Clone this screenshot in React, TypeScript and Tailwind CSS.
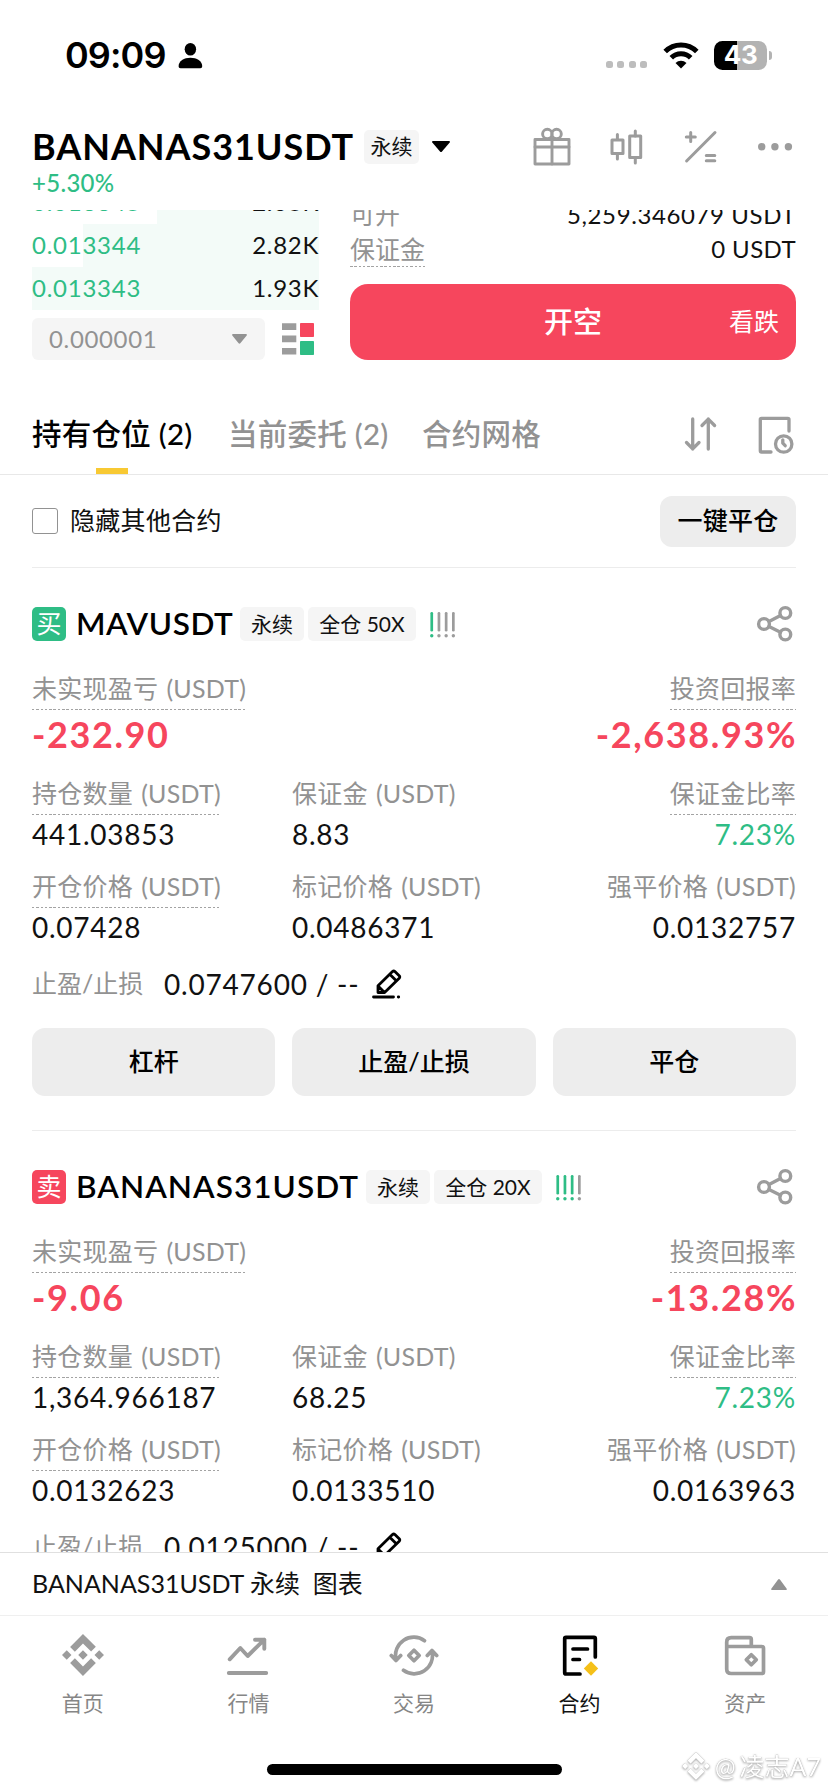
import type { ReactNode } from "react";
import { SiBinance } from "react-icons/si";
import clsx from "clsx";

type Side = "buy" | "sell";

type Position = {
  side: Side;
  symbol: string;
  leverage: string;
  risk: number;
  pnl: string;
  roi: string;
  size: string;
  margin: string;
  marginRatio: string;
  entryPrice: string;
  markPrice: string;
  liqPrice: string;
  takeProfit: string;
};

const POSITIONS: Position[] = [
  {
    side: "buy",
    symbol: "MAVUSDT",
    leverage: "全仓 50X",
    risk: 1,
    pnl: "-232.90",
    roi: "-2,638.93%",
    size: "441.03853",
    margin: "8.83",
    marginRatio: "7.23%",
    entryPrice: "0.07428",
    markPrice: "0.0486371",
    liqPrice: "0.0132757",
    takeProfit: "0.0747600 / --",
  },
  {
    side: "sell",
    symbol: "BANANAS31USDT",
    leverage: "全仓 20X",
    risk: 3,
    pnl: "-9.06",
    roi: "-13.28%",
    size: "1,364.966187",
    margin: "68.25",
    marginRatio: "7.23%",
    entryPrice: "0.0132623",
    markPrice: "0.0133510",
    liqPrice: "0.0163963",
    takeProfit: "0.0125000 / --",
  },
];

const BIDS = [
  { price: "0.013345", amount: "2.06K", depth: "w-[162px]" },
  { price: "0.013344", amount: "2.82K", depth: "w-[236px]" },
  { price: "0.013343", amount: "1.93K", depth: "w-[287px]" },
];

const line = {
  fill: "none",
  stroke: "currentColor",
  strokeLinecap: "round",
  strokeLinejoin: "round",
} as const;

function StatusBar() {
  return (
    <div className="flex h-[110px] shrink-0 items-start justify-between pl-[65px] pr-[56px] pt-[35px]">
      <div className="flex h-10 items-center">
        <span className="w-[111px] font-['Inter'] text-[36px] font-semibold tracking-[-0.9px] text-black">09:09</span>
        <svg className="ml-[2px] h-[27px] w-[25px]" viewBox="0 0 25 27" fill="#000">
          <ellipse cx="12.4" cy="7.3" rx="5.7" ry="6.3" />
          <path d="M.6 24.2C.6 19 6 15.800 12.400 15.800S24.200 19 24.200 24.200c0 1.300-.7 2-1.900 2H2.500C1.300 26.200.6 25.500.6 24.200z" />
        </svg>
      </div>
      <div className="flex h-10 items-center">
        <div className="mr-[16px] mt-[18px] flex gap-[4.400px]">
          {[0, 1, 2, 3].map((i) => (
            <span key={i} className="h-[7px] w-[7px] rounded-[2.500px] bg-[#bdbdbd]" />
          ))}
        </div>
        <svg className="h-[27px] w-[36px]" viewBox="0 0 36 27">
          <g fill="none" stroke="#000" strokeWidth="5">
            <path d="M2.200 9.600a22.300 22.300 0 0 1 31.600 0" />
            <path d="M8.300 15.700a13.700 13.700 0 0 1 19.400 0" />
          </g>
          <path d="M18 26.500l-5.500-5.600a8 8 0 0 1 11 0z" fill="#000" />
        </svg>
        <div className="ml-[15px] flex items-center">
          <div className="flex h-[29px] w-[53px] items-center justify-center rounded-[8.500px] bg-[linear-gradient(90deg,#000_43%,#b3b3b3_43%)]">
            <span className="font-['Inter'] text-[26px] font-bold leading-none tracking-[-0.5px] text-white">43</span>
          </div>
          <span className="ml-[2px] h-[9px] w-[3px] rounded-r-full bg-[#b3b3b3]" />
        </div>
      </div>
    </div>
  );
}

function Header() {
  return (
    <header className="flex h-[100px] shrink-0 items-start justify-between px-8">
      <div>
        <div className="flex h-[73px] items-center">
          <h1 className="w-[332px] whitespace-nowrap pb-[2px] text-[36px] font-bold tracking-[0.950px] text-black">
            BANANAS31USDT
          </h1>
          <span className="flex h-[34px] w-[55px] items-center justify-center rounded-[5px] bg-[#f5f5f5] pb-[2px] text-[21px] text-[#111]">
            永续
          </span>
          <svg className="ml-[12px] h-[13px] w-[20px]" viewBox="0 0 20 13">
            <path d="M2 1h16c1 0 1.200.8.700 1.400l-7.700 9.100c-.6.7-1.400.7-2 0L1.300 2.400C.8 1.800 1 1 2 1z" fill="#000" />
          </svg>
        </div>
        <p className="-mt-[15px] text-[24px] font-medium leading-[29px] tracking-[0.300px] text-[#2ebd85]">+5.30%</p>
      </div>
      <div className="mt-[17px] flex gap-[37px] text-[#9c9c9c]">
        <svg className="h-10 w-[38px]" viewBox="0 0 38 40" {...line} strokeWidth="2.900">
          <rect x="2" y="12.500" width="34" height="24.500" />
          <path d="M2 20h34M19 12v25" />
          <circle cx="14.300" cy="7" r="4.700" />
          <circle cx="23.600" cy="7" r="4.700" />
        </svg>
        <svg className="h-10 w-[38px]" viewBox="0 0 38 40" {...line} strokeWidth="3">
          <rect x="4" y="13" width="11" height="13.500" />
          <rect x="21.700" y="9" width="11" height="21.500" />
          <path d="M9.400 7.500v5M9.400 27v5M27.300 4v5M27.300 31v5" />
        </svg>
        <svg className="h-10 w-[38px]" viewBox="0 0 38 40" {...line} strokeWidth="3">
          <path d="M3.300 10H12.300M7.700 5.500v9M3.600 34L32 5.500M23.300 28.400h8.500M23.300 33.800h8.500" />
        </svg>
        <svg className="h-10 w-[38px]" viewBox="0 0 38 40" fill="currentColor">
          <circle cx="3.700" cy="19.700" r="3.700" />
          <circle cx="16.900" cy="19.700" r="3.700" />
          <circle cx="30.400" cy="19.700" r="3.700" />
        </svg>
      </div>
    </header>
  );
}

function OrderPanel() {
  return (
    <section className="flex h-[150px] shrink-0 justify-between overflow-hidden px-8">
      <div className="-mt-[29px] w-[287px]">
        {BIDS.map((bid) => (
          <div key={bid.price} className="relative flex h-[43px] items-center justify-between pb-[2px] text-[24px]">
            <span className={clsx("absolute inset-y-0 right-0 bg-[#f3fbf8]", bid.depth)} />
            <span className="relative tracking-[0.750px] text-[#2ebd85]">{bid.price}</span>
            <span className="relative tracking-[0.700px] text-[#111]">{bid.amount}</span>
          </div>
        ))}
        <div className="mt-2 flex items-center justify-between pr-[5px]">
          <div className="flex h-[42px] w-[233px] items-center justify-between rounded-[6px] bg-[#f5f5f5] pl-[17px] pr-[18px]">
            <span className="text-[24px] tracking-[0.650px] text-[#929292]">0.000001</span>
            <svg className="h-[10px] w-[15px]" viewBox="0 0 15 10">
              <path d="M1 0h13c.8 0 1.200.8.700 1.400L8.300 9.300c-.5.600-1.200.6-1.700 0L.3 1.400C-.2.800.2 0 1 0z" fill="#929292" />
            </svg>
          </div>
          <svg className="h-8 w-8" viewBox="0 0 32 32">
            <path d="M0 .3h14.300v6.600H0zM0 12.600h14.300v6.600H0zM0 25h14.300v6.600H0z" fill="#9c9c9c" />
            <rect x="18" width="14" height="14" rx=".8" fill="#f6465d" />
            <rect x="18" y="18" width="14" height="14" rx=".8" fill="#2ebd85" />
          </svg>
        </div>
      </div>
      <div className="-mt-[12px] w-[446px]">
        <div className="flex h-[34px] items-center justify-between">
          <span className="text-[25px] text-[#929292]">可开</span>
          <span className="text-[24px] tracking-[0.600px] text-[#111]">5,259.346079 USDT</span>
        </div>
        <div className="flex h-[35px] items-center justify-between">
          <span className="h-[35px] bg-[repeating-linear-gradient(90deg,#a3a3a3_0_2.500px,transparent_2.500px_4.300px)] bg-[length:100%_1.500px] bg-bottom bg-no-repeat text-[25px] leading-[34px] text-[#929292]">
            保证金
          </span>
          <span className="pb-px text-[24px] tracking-[0.400px] text-[#111]">0 USDT</span>
        </div>
        <button
          type="button"
          className="mt-[17px] grid h-[76px] w-full grid-cols-[1fr_auto_1fr] items-center rounded-[18px] bg-[#f6465d] pb-px text-white"
        >
          <span />
          <span className="text-[29px] font-medium">开空</span>
          <span className="pr-[17px] text-right text-[25px]">看跌</span>
        </button>
      </div>
    </section>
  );
}

const TABS = [
  { label: "持有仓位 (2)", active: true, width: "w-[196px]" },
  { label: "当前委托 (2)", active: false, width: "w-[194px]" },
  { label: "合约网格", active: false, width: "w-[120px]" },
];

function Tabs() {
  return (
    <nav className="flex h-[115px] shrink-0 items-end border-b border-[#e8e8e8] px-8">
      {TABS.map((tab) => (
        <div key={tab.label} className={tab.width}>
          <div className="inline-flex flex-col items-center">
            <span
              className={clsx(
                "whitespace-nowrap text-[29.500px] font-medium leading-[40px] tracking-[0.250px]",
                tab.active ? "text-black" : "text-[#929292]",
              )}
            >
              {tab.label}
            </span>
            <span className={clsx("mt-[14px] h-[6px] w-8", tab.active && "bg-[#f8c933]")} />
          </div>
        </div>
      ))}
      <div className="mb-[20px] ml-auto flex gap-[37px] text-[#9c9c9c]">
        <svg className="h-10 w-[38px]" viewBox="0 0 38 40" {...line} strokeWidth="3.300">
          <path d="M9.700 5v30M3.500 28.500l6.200 6.300 6.300-6.300M25.300 35V5M19 11.500l6.300-6.300 6.300 6.300" />
        </svg>
        <svg className="h-10 w-[38px]" viewBox="0 0 38 40" {...line} strokeWidth="3.300">
          <path d="M13 38H3.500Q2.300 38 2.300 36.800V5.500Q2.300 4.300 3.500 4.300H29.800Q31 4.300 31 5.500V17" />
          <circle cx="25.700" cy="30" r="8.200" />
          <path d="M24.800 25.800v3.400l2.400 2.500" />
        </svg>
      </div>
    </nav>
  );
}

function Label({ children, dotted }: { children: ReactNode; dotted?: boolean }) {
  return (
    <span
      className={clsx(
        "block h-[37px] w-fit whitespace-nowrap text-[25px] leading-[30px] tracking-[0.250px] text-[#929292] [word-spacing:1.500px]",
        dotted &&
          "bg-[repeating-linear-gradient(90deg,#a3a3a3_0_2.500px,transparent_2.500px_4.300px)] bg-[length:100%_1.500px] bg-bottom bg-no-repeat",
      )}
    >
      {children}
    </span>
  );
}

function Stat({
  label,
  value,
  dotted,
  className,
}: {
  label: string;
  value: string;
  dotted?: boolean;
  className?: string;
}) {
  return (
    <div className={clsx("flex flex-col", className)}>
      <Label dotted={dotted}>{label}</Label>
      <span className="mt-[3px] h-[34px] text-[28px] leading-[32px] tracking-[0.750px]">{value}</span>
    </div>
  );
}

function RiskBars({ level }: { level: number }) {
  return (
    <svg className="ml-[14px] h-[27px] w-[26px]" viewBox="0 0 26 27">
      {[0, 1, 2, 3].map((i) => (
        <g key={i} fill={i < level ? "#2ebd85" : "#9c9c9c"}>
          <rect x={0.4 + i * 7.2} y="1" width="2.700" height="19.500" rx="1.300" />
          <circle cx={1.75 + i * 7.2} cy="24.700" r="1.700" />
        </g>
      ))}
    </svg>
  );
}

function Tag({ children, className }: { children: ReactNode; className: string }) {
  return (
    <span
      className={clsx(
        "flex h-[34px] items-center justify-center whitespace-nowrap rounded-[5px] bg-[#f5f5f5] pb-px text-[21px] text-[#111]",
        className,
      )}
    >
      {children}
    </span>
  );
}

function PositionCard({ position }: { position: Position }) {
  const isBuy = position.side === "buy";

  return (
    <article className="mx-8 border-b border-[#ececec] pb-[34px] pt-[39px] text-[#111]">
      <div className="flex h-[34px] items-center">
        <span
          className={clsx(
            "flex h-[34px] w-[34px] items-center justify-center rounded-[5px] pb-px text-[25px] leading-none text-white",
            isBuy ? "bg-[#2ebd85]" : "bg-[#f6465d]",
          )}
        >
          {isBuy ? "买" : "卖"}
        </span>
        <h2
          className={clsx(
            "ml-[10px] whitespace-nowrap text-[31.500px] font-semibold text-black",
            isBuy ? "w-[164px] tracking-[0.600px]" : "w-[290px] tracking-[1.050px]",
          )}
        >
          {position.symbol}
        </h2>
        <Tag className="w-[64px]">永续</Tag>
        <Tag className="ml-1 w-[108px]">{position.leverage}</Tag>
        <RiskBars level={position.risk} />
        <svg className="ml-auto h-[38px] w-10 text-[#9c9c9c]" viewBox="0 0 40 38" {...line} strokeWidth="3.400">
          <circle cx="29.300" cy="8" r="5.400" />
          <circle cx="8" cy="19" r="5.400" />
          <circle cx="29.300" cy="29.500" r="5.400" />
          <path d="M13 16.500l11.500-6M13 21.500l11.500 5.700" />
        </svg>
      </div>

      <div className="mt-8 flex justify-between">
        <Label dotted>未实现盈亏 (USDT)</Label>
        <Label dotted>投资回报率</Label>
      </div>
      <div className="-mr-px mt-[4px] flex h-[41px] justify-between text-[36px] font-bold leading-[40px] tracking-[1.600px] text-[#f6465d]">
        <span>{position.pnl}</span>
        <span>{position.roi}</span>
      </div>

      <div className="mt-[23px] grid grid-cols-[260px_1fr_auto]">
        <Stat dotted label="持仓数量 (USDT)" value={position.size} />
        <Stat label="保证金 (USDT)" value={position.margin} />
        <Stat dotted label="保证金比率" value={position.marginRatio} className="items-end [&>span:last-child]:text-[#2ebd85]" />
      </div>
      <div className="mt-[19px] grid grid-cols-[260px_1fr_auto]">
        <Stat dotted label="开仓价格 (USDT)" value={position.entryPrice} />
        <Stat label="标记价格 (USDT)" value={position.markPrice} />
        <Stat label="强平价格 (USDT)" value={position.liqPrice} className="items-end" />
      </div>

      <div className="mt-[22px] flex h-[34px] items-center">
        <span className="w-[132px] pb-px text-[25px] text-[#929292]">止盈/止损</span>
        <span className="w-[207px] whitespace-nowrap pb-px text-[28px] tracking-[0.800px]">{position.takeProfit}</span>
        <svg className="h-8 w-8 text-black" viewBox="0 0 32 32" {...line} strokeWidth="2.800">
          <path d="M2.500 29h20M27.300 29h.4" />
          <path d="M7 24.500v-6.800L21.500 3.600q1.200-1.100 2.400 0l4.300 4.200q1.100 1.200 0 2.400L13.600 24.500zM19 6.500l6.300 6.300M7.300 18.200l6.200 6.200" />
        </svg>
      </div>

      <div className="mt-[27px] grid grid-cols-3 gap-[17px] text-[25px] font-medium text-black">
        {["杠杆", "止盈/止损", "平仓"].map((action) => (
          <button key={action} type="button" className="h-[68px] rounded-[13px] bg-[#ededed]">
            {action}
          </button>
        ))}
      </div>
    </article>
  );
}

function FilterRow() {
  return (
    <div className="mx-8 flex h-[93px] items-center justify-between border-b border-[#ececec] text-[25px]">
      <label className="flex items-center gap-[12px] tracking-[0.300px] text-[#111]">
        <span className="h-[26px] w-[26px] rounded-[3px] border-[1.500px] border-[#929292]" />
        <span className="pb-px">隐藏其他合约</span>
      </label>
      <button type="button" className="h-[51px] w-[136px] rounded-[12px] bg-[#ededed] pb-px font-medium tracking-[0.250px] text-black">
        一键平仓
      </button>
    </div>
  );
}

function TabItem({ label, active, children }: { label: string; active?: boolean; children: ReactNode }) {
  return (
    <div className={clsx("flex flex-1 flex-col items-center pt-[15px]", active ? "text-black" : "text-[#9c9c9c]")}>
      <div className="flex h-[47px] items-center">{children}</div>
      <span className={clsx("mb-px mt-[10px] text-[21px] leading-[30px]", active ? "text-[#111]" : "text-[#868686]")}>
        {label}
      </span>
    </div>
  );
}

function BottomBar() {
  return (
    <footer className="relative h-[240px] shrink-0 border-t border-[#e0e0e0] bg-white">
      <div className="flex h-[63px] items-center justify-between border-b border-[#efefef] pl-8 pr-[41px] text-[25px] text-[#111]">
        <span className="whitespace-pre pb-px">BANANAS31USDT 永续  图表</span>
        <svg className="h-[11px] w-[16px]" viewBox="0 0 16 11">
          <path d="M1 11h14c.8 0 1.200-.7.700-1.300L8.900.6c-.5-.7-1.300-.7-1.800 0L.3 9.700C-.2 10.300.2 11 1 11z" fill="#929292" />
        </svg>
      </div>
      <div className="flex">
        <TabItem label="首页">
          <SiBinance size={42} />
        </TabItem>
        <TabItem label="行情">
          <svg className="h-[46px] w-[46px]" viewBox="0 0 46 46" {...line} strokeWidth="3.900">
            <path d="M4.700 27.300L15.300 16l7.400 8L39.300 7.700M30 7.700h9.300v9M3.800 41h37.400" />
          </svg>
        </TabItem>
        <TabItem label="交易">
          <svg className="h-[46px] w-[50px]" viewBox="0 0 50 46" {...line} strokeWidth="3.700">
            <path d="M35.500 8.700A18.200 18.200 0 0 0 7 27.500M2.300 23.500l4.700 5 4.700-5" />
            <path d="M14.500 38.300A18.200 18.200 0 0 0 43 19.500M38.300 23.500l4.700-5 4.700 5" />
            <path d="M25 18.200l5.200 5.300-5.200 5.300-5.200-5.300z" />
          </svg>
        </TabItem>
        <TabItem label="合约" active>
          <svg className="h-[46px] w-10" viewBox="0 0 40 46" {...line} strokeWidth="3.700">
            <path d="M20 42H6Q4.700 42 4.700 40.700V6.600Q4.700 5.300 6 5.300h28q1.300 0 1.300 1.300V25M13 17h14.500M13 27.500h6.500" />
            <path d="M31 29.300l7.200 7.200-7.200 7.200-7.200-7.200z" fill="#f5c019" stroke="none" />
          </svg>
        </TabItem>
        <TabItem label="资产">
          <svg className="h-[46px] w-[44px]" viewBox="0 0 44 46" {...line} strokeWidth="3.700">
            <path d="M3.700 14.500h35q1.800 0 1.800 1.800v23.400q0 1.800-1.800 1.800H8.200q-4.500 0-4.500-4.500V10.200q0-4.500 4.500-4.500h18.300q1.800 0 1.800 1.800v7" />
            <path d="M28.300 22.800l5 5-5 5-5-5z" />
          </svg>
        </TabItem>
      </div>
      <div className="mx-auto mt-[45px] h-[11px] w-[295px] rounded-full bg-black" />
      <div className="absolute bottom-[10px] right-[7px] flex items-center gap-[5px] text-[25px] leading-[32px] text-white [filter:drop-shadow(0_0_0.700px_#999)_drop-shadow(0.500px_1px_0.800px_#aaa)]">
        <SiBinance size={28} />
        <span>@</span>
        <span className="-ml-px">凌志A7</span>
      </div>
    </footer>
  );
}

export default function App() {
  return (
    <div className="flex h-[1792px] w-[828px] flex-col overflow-hidden bg-white font-['Lato','Noto_Sans_CJK_SC',sans-serif]">
      <StatusBar />
      <Header />
      <OrderPanel />
      <Tabs />
      <main className="min-h-0 flex-1 overflow-hidden">
        <FilterRow />
        {POSITIONS.map((position) => (
          <PositionCard key={position.symbol} position={position} />
        ))}
      </main>
      <BottomBar />
    </div>
  );
}
